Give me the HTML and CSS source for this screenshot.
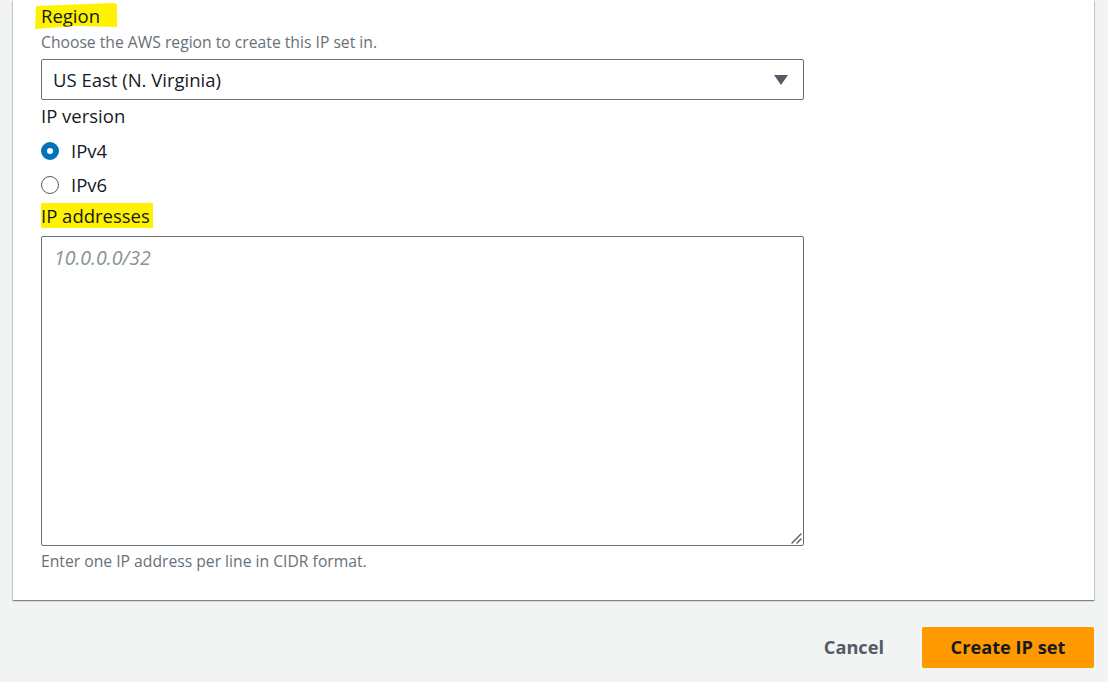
FILE: index.html
```html
<!DOCTYPE html>
<html lang="en">
<head>
    <meta charset="UTF-8">
    <meta name="viewport" content="width=device-width, initial-scale=1.0">
    <title>Create IP set</title>
    <link rel="stylesheet" href="styles.css">
</head>
<body>

<div class="card">
    <div class="field">
        <label class="label"><span class="mark mark-region">Region</span></label>
        <div class="desc">Choose the AWS region to create this IP set in.</div>
        <div class="select">
            <span>US East (N. Virginia)</span>
            <svg class="caret" width="14" height="10" viewBox="0 0 14 10"><path d="M0 0h14L7 10z" fill="#545b64"/></svg>
        </div>
    </div>

    <div class="field version">
        <label class="label">IP version</label>
        <div class="radios">
            <label class="radio"><span class="dot checked"></span>IPv4</label>
            <label class="radio"><span class="dot"></span>IPv6</label>
        </div>
    </div>

    <div class="field addresses">
        <label class="label"><span class="mark">IP addresses</span></label>
        <div class="textarea">
            <span class="placeholder">10.0.0.0/32</span>
            <svg class="grip" width="12" height="12" viewBox="0 0 12 12"><path d="M11 2L2 11M11 7L7 11" stroke="#545b64" stroke-width="1.4" stroke-linecap="round"/></svg>
        </div>
        <div class="desc help">Enter one IP address per line in CIDR format.</div>
    </div>
</div>

<div class="actions">
    <button class="btn-link">Cancel</button>
    <button class="btn-primary">Create IP set</button>
</div>

</body>
</html>
```

FILE: styles.css
```css
body {
    margin: 0;
    background-color: #f2f3f3;
    font-family: "Open Sans", "Noto Sans", sans-serif;
    color: #16191f;
}
.card {
    margin: 0 14px 0 13px;
    padding: 3px 28px 28px 28px;
    background-color: #fff;
    box-shadow: 0 1px 1px 0 rgba(0, 28, 36, 0.3), 1px 1px 1px 0 rgba(0, 28, 36, 0.15), -1px 1px 1px 0 rgba(0, 28, 36, 0.15);
}
.field {
    width: 763px;
}
.label {
    display: block;
    font-size: 18.5px;
    line-height: 26px;
    height: 26px;
}
.mark {
    display: inline-block;
    background-color: #fff200;
    padding: 0 3px 0 0;
    line-height: 25px;
    margin-top: 1px;
}
.mark-region {
    padding: 0 17px 0 6px;
    margin: -1px 0 0 -6px;
    line-height: 26px;
    clip-path: polygon(1px 3px, 79px 0, 84px 2px, 83px 24px, 40px 23px, 0 26px);
}
.desc {
    font-size: 15.7px;
    line-height: 26px;
    color: #687078;
}
.select {
    margin-top: 4px;
    height: 41px;
    box-sizing: border-box;
    border: 1px solid #687078;
    border-radius: 2px;
    display: flex;
    align-items: center;
    justify-content: space-between;
    padding: 0 15px 0 11px;
    font-size: 18.5px;
}
.version {
    margin-top: 3px;
}
.radios {
    display: flex;
    flex-direction: column;
    gap: 10px;
    padding-top: 10px;
}
.radio {
    display: flex;
    align-items: center;
    gap: 12px;
    font-size: 18.5px;
    line-height: 24px;
}
.dot {
    width: 18px;
    height: 18px;
    border: 1.5px solid #545b64;
    border-radius: 50%;
    box-sizing: border-box;
    flex: none;
}
.dot.checked {
    border: 6px solid #0073bb;
    background-color: #fff;
}
.addresses {
    margin-top: 5px;
}
.textarea {
    position: relative;
    margin-top: 8px;
    height: 310px;
    box-sizing: border-box;
    border: 1px solid #687078;
    border-radius: 2px;
    padding: 8px 12px;
}
.placeholder {
    font-style: italic;
    font-size: 19.5px;
    line-height: 26px;
    color: #879596;
}
.grip {
    position: absolute;
    right: 1px;
    bottom: 1px;
}
.help {
    margin-top: 4px;
    line-height: 22px;
}
.actions {
    display: flex;
    justify-content: flex-end;
    align-items: center;
    gap: 18px;
    padding: 25px 14px 0 0;
}
button {
    font-family: inherit;
    font-size: 18.2px;
    font-weight: 700;
    border: none;
    cursor: pointer;
}
.btn-link {
    background: none;
    color: #545b64;
    padding: 10px 20px;
}
.btn-primary {
    background-color: #ff9900;
    color: #16191f;
    height: 41px;
    width: 172px;
    border-radius: 2px;
}
```
